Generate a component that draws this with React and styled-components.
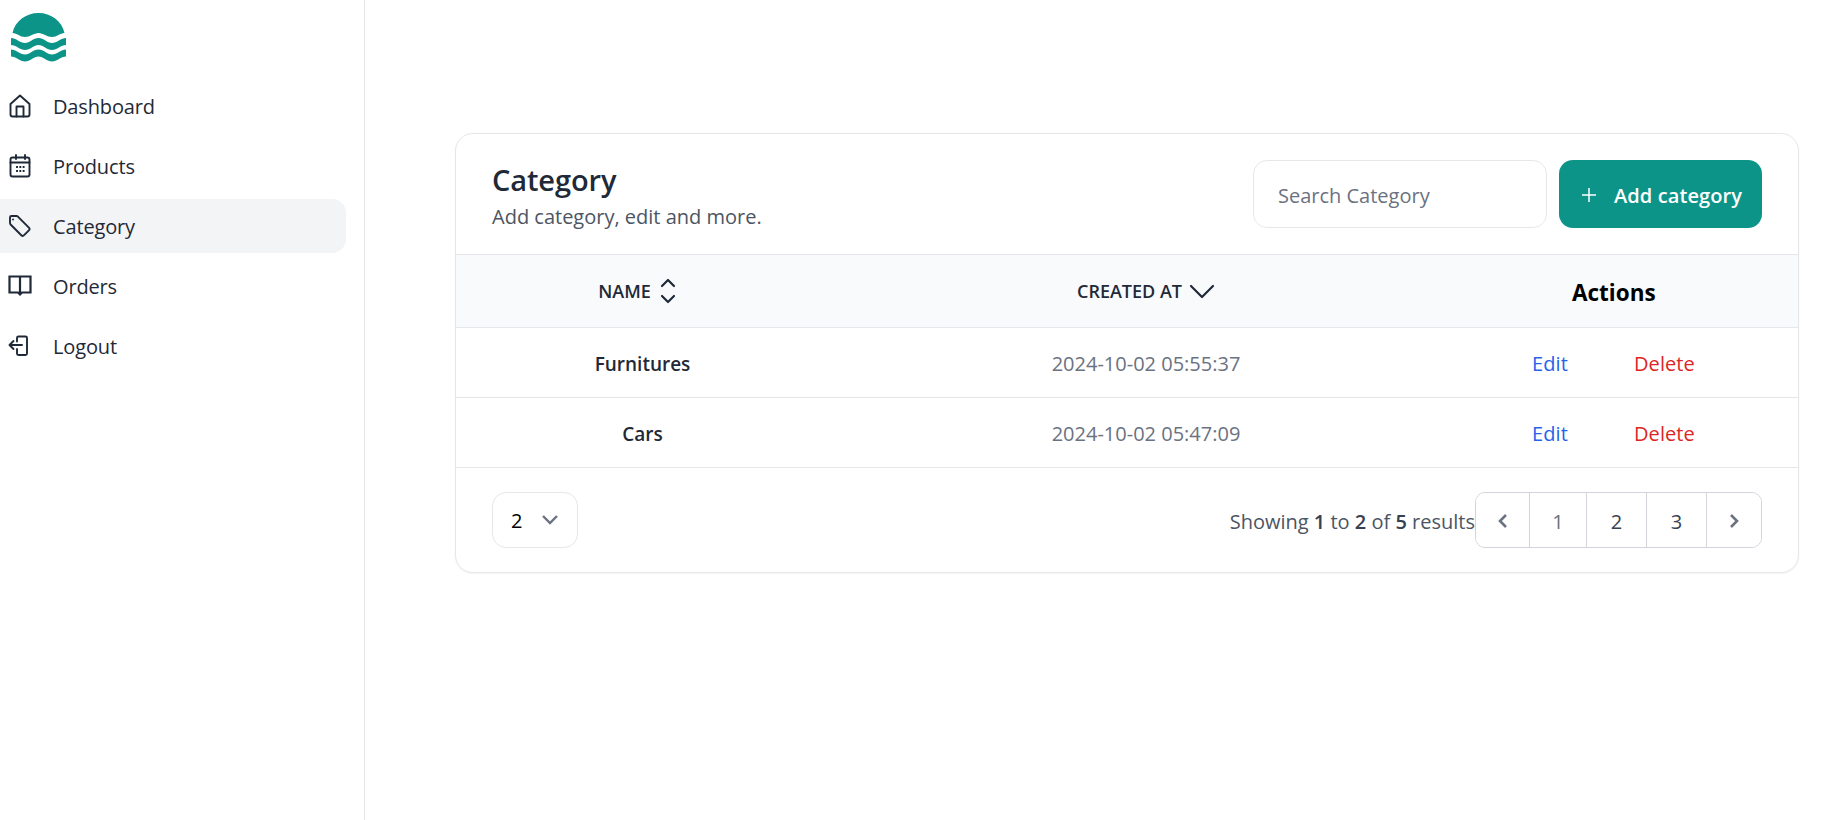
import React from 'react';
import styled, { createGlobalStyle } from 'styled-components';

const GlobalStyle = createGlobalStyle`
  html, body {
    margin: 0;
    padding: 0;
    background: #fff;
    font-family: "Open Sans", "Noto Sans", sans-serif;
    color: #1f2937;
  }
  * { box-sizing: border-box; }
`;

const navItems = [
  { label: 'Dashboard', icon: 'home' },
  { label: 'Products', icon: 'calendar' },
  { label: 'Category', icon: 'tag', active: true },
  { label: 'Orders', icon: 'book' },
  { label: 'Logout', icon: 'logout' },
];

const rows = [
  { name: 'Furnitures', created: '2024-10-02 05:55:37' },
  { name: 'Cars', created: '2024-10-02 05:47:09' },
];

const NavIcon = ({ name }) => {
  const paths = {
    home: (
      <>
        <path d="M2.500 10 12 1.500 21.500 10v10.500a2 2 0 0 1-2 2h-15a2 2 0 0 1-2-2z" />
        <path d="M8.500 22.500V12.500h7v10" />
      </>
    ),
    calendar: (
      <>
        <rect x="2.500" y="3.500" width="19" height="19" rx="2" />
        <path d="M2.500 8.500h19M8 1v4M17 1v4" />
        <path d="M9 13h.01M12.300 13h.01M15.600 13h.01M9 17h.01M12.300 17h.01M15.600 17h.01" strokeLinecap="square" />
      </>
    ),
    tag: (
      <>
        <path d="M2 3.500A1.500 1.500 0 0 1 3.500 2H8.500a2 2 0 0 1 1.400.600l11 11a2 2 0 0 1 0 2.800l-4.800 4.800a2 2 0 0 1-2.800 0L2.600 10.500a2 2 0 0 1-.600-1.400z" />
        <path d="M5 5.500h.01" />
      </>
    ),
    book: (
      <path d="M1.500 2.500H22.500V18.500H14L12 20.500 10 18.500H1.500ZM12 2.500V21" strokeLinejoin="miter" strokeLinecap="butt" strokeWidth="2.200" />
    ),
    logout: (
      <>
        <path d="M9 7.500V4A1.500 1.500 0 0 1 10.500 2.500H17.500A1.500 1.500 0 0 1 19 4V19.500A1.500 1.500 0 0 1 17.500 21H10.500A1.500 1.500 0 0 1 9 19.500V15" />
        <path d="M14 11H1.500M5.500 7 1.500 11l4 4" />
      </>
    ),
  };
  return (
    <IconSvg viewBox="0 0 24 24" fill="none" stroke="currentColor" strokeWidth="1.900" strokeLinecap="round" strokeLinejoin="round">
      {paths[name]}
    </IconSvg>
  );
};

const wavePath = 'C16 38 20 43 25 43S33 38 38.500 38S47 43 52 43S61 38 66 38V45C61 45 57 50 52 50S43 45 38.500 45S30 50 25 50S16 45 11 45Z';

const Logo = () => (
  <svg width="80" height="70" viewBox="0 0 80 70" fill="#0d9488">
    <path d="M12.500 33C15 21 26 13 38.500 13S62 21 64.500 33C60 33 57 37 52 37S43 33 38.500 33S30 37 25 37S17 33 12.500 33Z" />
    <path d={`M11 38${wavePath}`} />
    <path d={`M11 38${wavePath}`} transform="translate(0 11.500)" />
  </svg>
);

const App = () => (
  <Page>
    <GlobalStyle />
    <Sidebar>
      <LogoWrap>
        <Logo />
      </LogoWrap>
      <Nav>
        {navItems.map((item) => (
          <NavItem key={item.label} $active={item.active}>
            <NavIcon name={item.icon} />
            <span>{item.label}</span>
          </NavItem>
        ))}
      </Nav>
    </Sidebar>
    <Main>
      <Card>
        <CardHeader>
          <TitleBlock>
            <Title>Category</Title>
            <Subtitle>Add category, edit and more.</Subtitle>
          </TitleBlock>
          <Tools>
            <SearchInput placeholder="Search Category" />
            <AddButton>
              <svg width="20" height="20" viewBox="0 0 20 20" fill="none" stroke="currentColor" strokeWidth="1.5">
                <path d="M10 3v14M3 10h14" />
              </svg>
              Add category
            </AddButton>
          </Tools>
        </CardHeader>
        <TableHead>
          <NameCell>
            <HeadLabel>
              NAME
              <svg width="20" height="26" viewBox="0 0 20 26" fill="none" stroke="currentColor" strokeWidth="2.200" strokeLinecap="round" strokeLinejoin="round">
                <path d="M4 8l6-6 6 6M4 18l6 6 6-6" />
              </svg>
            </HeadLabel>
          </NameCell>
          <DateCell>
            <HeadLabel>
              CREATED AT
              <svg width="26" height="16" viewBox="0 0 26 16" fill="none" stroke="currentColor" strokeWidth="2.200" strokeLinecap="round" strokeLinejoin="round">
                <path d="M2 3l11 11L24 3" />
              </svg>
            </HeadLabel>
          </DateCell>
          <ActionsCell>
            <ActionsTitle>Actions</ActionsTitle>
          </ActionsCell>
        </TableHead>
        {rows.map((row) => (
          <Row key={row.name}>
            <NameCell>
              <RowName>{row.name}</RowName>
            </NameCell>
            <DateCell>{row.created}</DateCell>
            <ActionsCell>
              <Action $color="#2563eb">Edit</Action>
              <Action $color="#dc2626">Delete</Action>
            </ActionsCell>
          </Row>
        ))}
        <Footer>
          <PageSize>
            2
            <svg width="20" height="18" viewBox="0 0 20 18" fill="none" stroke="#6b7280" strokeWidth="2.400">
              <path d="M3 5l7 7 7-7" />
            </svg>
          </PageSize>
          <FooterRight>
            <Results>
              Showing <b>1</b> to <b>2</b> of <b>5</b> results
            </Results>
            <Pager>
              <PagerButton $width={54}>
                <svg width="16" height="18" viewBox="0 0 16 18" fill="none" stroke="#6b7280" strokeWidth="2.600">
                  <path d="M11 3L5 9l6 6" />
                </svg>
              </PagerButton>
              <PagerButton $width={57} $muted>1</PagerButton>
              <PagerButton $width={60}>2</PagerButton>
              <PagerButton $width={60}>3</PagerButton>
              <PagerButton $width={54}>
                <svg width="16" height="18" viewBox="0 0 16 18" fill="none" stroke="#6b7280" strokeWidth="2.600">
                  <path d="M5 3l6 6-6 6" />
                </svg>
              </PagerButton>
            </Pager>
          </FooterRight>
        </Footer>
      </Card>
    </Main>
  </Page>
);

const Page = styled.div`
  display: flex;
  min-height: 820px;
`;

const Sidebar = styled.aside`
  width: 365px;
  flex-shrink: 0;
  border-right: 1px solid #e5e7eb;
  padding-right: 18px;
`;

const LogoWrap = styled.div`
  height: 79px;
`;

const Nav = styled.nav`
  display: flex;
  flex-direction: column;
  gap: 6px;
`;

const NavItem = styled.a`
  display: flex;
  align-items: center;
  gap: 21px;
  height: 54px;
  padding-left: 8px;
  border-radius: 0 14px 14px 0;
  font-size: 20px;
  letter-spacing: -0.15px;
  color: #1f2937;
  background: ${(p) => (p.$active ? '#f3f4f6' : 'transparent')};
  span {
    padding-top: 1px;
  }
`;

const IconSvg = styled.svg`
  width: 24px;
  height: 24px;
  flex-shrink: 0;
`;

const Main = styled.main`
  flex: 1;
  padding: 133px 39px 0 90px;
`;

const Card = styled.section`
  border: 1px solid #e5e7eb;
  border-radius: 18px;
  box-shadow: 0 1px 2px rgba(0, 0, 0, 0.05);
  background: #fff;
  overflow: hidden;
`;

const CardHeader = styled.header`
  display: flex;
  justify-content: space-between;
  align-items: center;
  height: 121px;
  padding: 0 36px;
  border-bottom: 1px solid #e5e7eb;
`;

const TitleBlock = styled.div`
  padding-top: 6px;
`;

const Title = styled.h2`
  margin: 0;
  font-size: 29px;
  line-height: 38px;
  font-weight: 600;
  letter-spacing: -0.1px;
  color: #1f2937;
`;

const Subtitle = styled.p`
  margin: 0;
  font-size: 20px;
  line-height: 35px;
  color: #4b5563;
`;

const Tools = styled.div`
  display: flex;
  gap: 12px;
`;

const SearchInput = styled.input`
  width: 294px;
  height: 68px;
  padding: 2px 24px 0;
  border: 1px solid #e5e7eb;
  border-radius: 14px;
  font: inherit;
  font-size: 20px;
  outline: none;
  &::placeholder {
    color: #6b7280;
    opacity: 1;
  }
`;

const AddButton = styled.button`
  display: flex;
  align-items: center;
  gap: 15px;
  width: 203px;
  height: 68px;
  padding: 2px 0 0 20px;
  border: 0;
  border-radius: 14px;
  background: #0d9488;
  color: #fff;
  font: inherit;
  font-size: 20px;
  font-weight: 600;
  letter-spacing: 0.1px;
`;

const rowGrid = `
  display: grid;
  grid-template-columns: 364px 652px 1fr;
  align-items: center;
`;

const TableHead = styled.div`
  ${rowGrid}
  height: 73px;
  background: #f9fafb;
  border-bottom: 1px solid #e5e7eb;
`;

const Row = styled.div`
  ${rowGrid}
  height: 70px;
  padding-top: 2px;
  border-bottom: 1px solid #e5e7eb;
  font-size: 20px;
`;

const NameCell = styled.div`
  display: flex;
  justify-content: center;
`;

const DateCell = styled.div`
  display: flex;
  justify-content: center;
  color: #6b7280;
`;

const ActionsCell = styled.div`
  display: flex;
  gap: 66px;
  padding-left: 60px;
`;

const HeadLabel = styled.span`
  display: flex;
  align-items: center;
  gap: 7px;
  font-size: 18px;
  font-weight: 600;
  color: #1f2937;
`;

const ActionsTitle = styled.span`
  margin: 2px 0 0 40px;
  font-size: 22.500px;
  font-weight: 700;
  color: #000;
`;

const RowName = styled.span`
  padding-left: 9px;
  font-size: 19px;
  font-weight: 600;
  color: #1f2937;
`;

const Action = styled.a`
  font-weight: 500;
  letter-spacing: 0.1px;
  color: ${(p) => p.$color};
`;

const Footer = styled.footer`
  display: flex;
  justify-content: space-between;
  align-items: center;
  height: 104px;
  padding: 0 36px;
`;

const PageSize = styled.div`
  display: flex;
  align-items: center;
  gap: 18px;
  width: 86px;
  height: 56px;
  padding-left: 18px;
  border: 1px solid #e5e7eb;
  border-radius: 14px;
  font-size: 20px;
  color: #000;
`;

const FooterRight = styled.div`
  display: flex;
  align-items: center;
`;

const Results = styled.p`
  margin: 2px 0 0;
  font-size: 20px;
  color: #4b5563;
  b {
    font-weight: 600;
    color: #374151;
  }
`;

const Pager = styled.div`
  display: flex;
  height: 56px;
  border: 1px solid #d1d5db;
  border-radius: 10px;
  overflow: hidden;
`;

const PagerButton = styled.button`
  display: flex;
  align-items: center;
  justify-content: center;
  width: ${(p) => p.$width}px;
  padding: 2px 0 0;
  border: 0;
  border-right: 1px solid #d1d5db;
  background: #fff;
  font: inherit;
  font-size: 20px;
  color: ${(p) => (p.$muted ? '#6b7280' : '#374151')};
  &:last-child {
    border-right: 0;
  }
`;

export default App;
